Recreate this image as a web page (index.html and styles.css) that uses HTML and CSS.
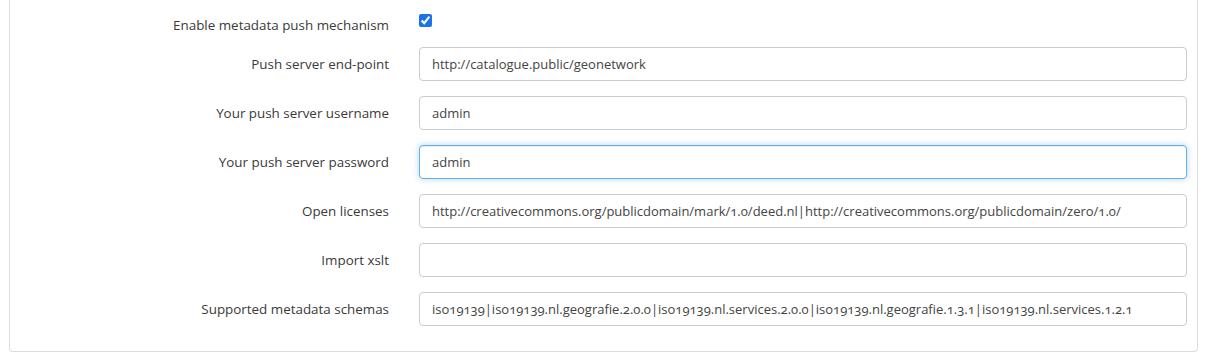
FILE: index.html
```html
<!DOCTYPE html>
<html lang="en">

<head>
  <meta charset="UTF-8">
  <meta name="viewport" content="width=device-width, initial-scale=1.0">
  <title>Metadata push settings</title>
  <link rel="stylesheet" href="styles.css">
</head>

<body>
  <div class="settingsPanel">
    <form class="settingsForm">
      <div class="formGroup checkGroup">
        <label class="formLabel" for="enablePush">Enable metadata push mechanism</label>
        <div class="formField">
          <input class="formCheck" id="enablePush" type="checkbox" checked>
        </div>
      </div>

      <div class="formGroup">
        <label class="formLabel" for="endpoint">Push server end-point</label>
        <div class="formField">
          <input class="formInput" id="endpoint" type="text" value="http://catalogue.public/geonetwork">
        </div>
      </div>

      <div class="formGroup">
        <label class="formLabel" for="username">Your push server username</label>
        <div class="formField">
          <input class="formInput" id="username" type="text" value="admin">
        </div>
      </div>

      <div class="formGroup">
        <label class="formLabel" for="password">Your push server password</label>
        <div class="formField">
          <input class="formInput isFocused" id="password" type="text" value="admin">
        </div>
      </div>

      <div class="formGroup">
        <label class="formLabel" for="licenses">Open licenses</label>
        <div class="formField">
          <input class="formInput" id="licenses" type="text"
            value="http://creativecommons.org/publicdomain/mark/1.0/deed.nl|http://creativecommons.org/publicdomain/zero/1.0/">
        </div>
      </div>

      <div class="formGroup">
        <label class="formLabel" for="xslt">Import xslt</label>
        <div class="formField">
          <input class="formInput" id="xslt" type="text" value="">
        </div>
      </div>

      <div class="formGroup">
        <label class="formLabel" for="schemas">Supported metadata schemas</label>
        <div class="formField">
          <input class="formInput" id="schemas" type="text"
            value="iso19139|iso19139.nl.geografie.2.0.0|iso19139.nl.services.2.0.0|iso19139.nl.geografie.1.3.1|iso19139.nl.services.1.2.1">
        </div>
      </div>
    </form>
  </div>
</body>

</html>
```

FILE: styles.css
```css
body {
  margin: 0;
  background: #ffffff;
  font-family: "Open Sans", "Liberation Sans", sans-serif;
  font-size: 13px;
  color: #333333;
}

.settingsPanel {
  margin: 0 7px 0 9px;
  border: 1px solid #dddddd;
  border-top: 0;
  border-radius: 0 0 4px 4px;
  padding: 0 10px 25px 0;
}

.settingsForm {
  display: flex;
  flex-direction: column;
}

.formGroup {
  display: flex;
  align-items: center;
  margin-bottom: 15px;
}

.formGroup:last-child {
  margin-bottom: 0;
}

.formLabel {
  width: 379px;
  margin-right: 30px;
  text-align: right;
  font-size: 13.4px;
  line-height: 20px;
  color: #3a3a3a;
  font-variant-numeric: oldstyle-nums;
}

.formField {
  flex: 1;
}

.checkGroup {
  align-items: flex-start;
  height: 32px;
  margin-bottom: 15px;
}

.checkGroup .formLabel {
  padding-top: 15px;
}

.formCheck {
  margin: 14px 0 0 0;
  width: 13px;
  height: 13px;
  accent-color: #1a73e8;
}

.formInput {
  box-sizing: border-box;
  width: 100%;
  height: 34px;
  padding: 6px 12px;
  font-family: inherit;
  font-size: 13px;
  color: #444444;
  background: #ffffff;
  border: 1px solid #cccccc;
  border-radius: 4px;
  outline: none;
  font-variant-numeric: oldstyle-nums;
}

.isFocused {
  border-color: #66afe9;
  box-shadow: inset 0 1px 1px rgba(0, 0, 0, .075), 0 0 6px rgba(102, 175, 233, .5);
}
```
